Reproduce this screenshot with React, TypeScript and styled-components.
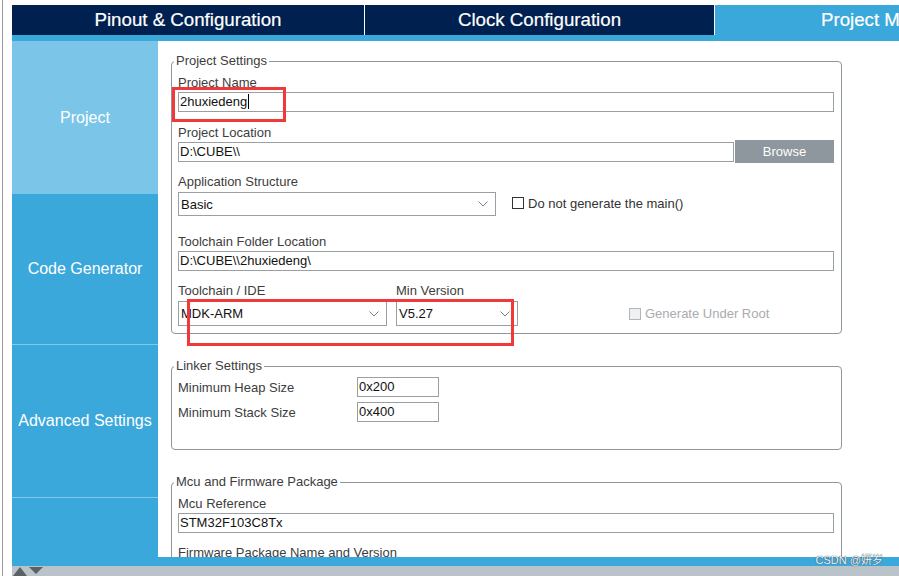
import styled, { createGlobalStyle } from "styled-components";

const GlobalStyle = createGlobalStyle`
  *, *::before, *::after { box-sizing: border-box; }
  html, body { margin: 0; padding: 0; background: #fff; overflow: hidden; }
  body { font-family: "Liberation Sans", Arial, sans-serif; }
`;

const Screen = styled.div`
  display: flex;
  width: 899px;
  height: 576px;
  overflow: hidden;
  background: #fff;
`;

const Gutter = styled.div`
  width: 12px;
  flex-shrink: 0;
  background: linear-gradient(to right, #fff 2px, #9a9a9a 2px, #9a9a9a 3px, #fff 3px);
`;

const Window = styled.div`
  position: relative;
  flex: 1;
  min-width: 0;
  display: flex;
  flex-direction: column;
  padding-top: 5px;
`;

const TabBar = styled.div`
  display: flex;
  height: 30px;
  flex-shrink: 0;
  background: #00204f;
  overflow: hidden;
`;

const Tab = styled.div<{ $width: number; $active?: boolean }>`
  flex: 0 0 ${(p) => p.$width}px;
  display: flex;
  align-items: center;
  justify-content: center;
  border-right: 1px solid #fff;
  background: ${(p) => (p.$active ? "#3aa8db" : "transparent")};
  color: #fff;
  font-size: 18.7px;
  white-space: nowrap;
  -webkit-text-stroke: 0.2px #fff;
`;

const TabStrip = styled.div`
  height: 6px;
  flex-shrink: 0;
  background: #3aa8db;
`;

const Body = styled.div`
  display: flex;
  height: 516px;
  flex-shrink: 0;
`;

const Sidebar = styled.div`
  width: 146px;
  flex-shrink: 0;
  display: flex;
  flex-direction: column;
  background: #3aa8db;
`;

const SideItem = styled.div<{ $height: number; $active?: boolean; $divider?: boolean }>`
  height: ${(p) => p.$height}px;
  flex-shrink: 0;
  display: flex;
  align-items: center;
  justify-content: center;
  background: ${(p) => (p.$active ? "#7bc6e8" : "#3aa8db")};
  border-top: ${(p) => (p.$divider ? "1px solid #82caec" : "none")};
  color: #fff;
  font-size: 16px;
  white-space: nowrap;
`;

const Main = styled.div`
  position: relative;
  flex: 1;
  padding: 12px 0 0 13px;
  overflow: hidden;
  background: #fff;
`;

const Group = styled.fieldset`
  width: 671px;
  margin: 0 0 24px 0;
  padding: 6px 7px 7px 6px;
  border: 1px solid #8f969c;
  border-radius: 4px;
  min-width: 0;
`;

const LinkerGroup = styled(Group)`
  padding: 3px 7px 27px 6px;
`;

const Legend = styled.legend`
  padding: 0 2px;
  margin-left: -4px;
  font-size: 13px;
  line-height: 16px;
  color: #3d3d3d;
`;

const Field = styled.div<{ $mb: number }>`
  margin-bottom: ${(p) => p.$mb}px;
`;

const Label = styled.div`
  height: 16px;
  font-size: 13px;
  line-height: 16px;
  color: #3d3d3d;
  white-space: nowrap;
`;

const TextBox = styled.div<{ $width?: number }>`
  width: ${(p) => (p.$width ? `${p.$width}px` : "100%")};
  height: 20px;
  margin-top: 1px;
  padding: 0 1px;
  border: 1px solid #9a9fa3;
  font-size: 13px;
  line-height: 18px;
  color: #111;
  white-space: nowrap;
  overflow: hidden;
`;

const Caret = styled.span`
  display: inline-block;
  width: 1px;
  height: 15px;
  margin-left: 1px;
  background: #000;
  vertical-align: -3px;
`;

const Row = styled.div<{ $align?: string }>`
  display: flex;
  align-items: ${(p) => p.$align ?? "flex-start"};
`;

const BrowseButton = styled.div`
  width: 99px;
  height: 23px;
  margin-left: 1px;
  margin-top: -1px;
  display: flex;
  align-items: center;
  justify-content: center;
  background: #8e979d;
  color: #fff;
  font-size: 13px;
`;

const SelectBox = styled.div<{ $width: number; $height: number }>`
  width: ${(p) => p.$width}px;
  height: ${(p) => p.$height}px;
  margin-top: 2px;
  padding: 0 7px 0 2px;
  display: flex;
  align-items: center;
  justify-content: space-between;
  border: 1px solid #9a9fa3;
  font-size: 13px;
  color: #111;
  white-space: nowrap;
`;

const Chevron = () => (
  <svg width="10" height="6" viewBox="0 0 10 6">
    <polyline points="0.5,0.5 5,5 9.5,0.5" fill="none" stroke="#7a7f83" strokeWidth="1" />
  </svg>
);

const CheckOption = styled.div<{ $disabled?: boolean; $ml: number; $height: number }>`
  height: ${(p) => p.$height}px;
  margin-left: ${(p) => p.$ml}px;
  display: flex;
  align-items: center;
  gap: 4px;
  font-size: 13px;
  color: ${(p) => (p.$disabled ? "#a8abaf" : "#333")};
  white-space: nowrap;
`;

const CheckBox = styled.span<{ $disabled?: boolean }>`
  width: 12px;
  height: 12px;
  border: 1px solid ${(p) => (p.$disabled ? "#b3b6b9" : "#333")};
  background: ${(p) => (p.$disabled ? "#eef0f2" : "#fff")};
`;

const ToolCol = styled.div<{ $width: number; $mr?: number }>`
  width: ${(p) => p.$width}px;
  margin-right: ${(p) => p.$mr ?? 0}px;
`;

const LinkRow = styled.div`
  display: flex;
  align-items: center;
  height: 20px;
  margin-bottom: 5px;
  &:last-child { margin-bottom: 0; }
`;

const LinkLabel = styled.div`
  width: 179px;
  font-size: 13px;
  color: #3d3d3d;
`;

const SmallBox = styled(TextBox)`
  margin-top: 0;
`;

const Annotation = styled.div<{ $left: number; $top: number; $w: number; $h: number }>`
  position: absolute;
  left: ${(p) => p.$left}px;
  top: ${(p) => p.$top}px;
  width: ${(p) => p.$w}px;
  height: ${(p) => p.$h}px;
  border: 3px solid #f2393a;
  pointer-events: none;
`;

const FooterStrip = styled.div`
  height: 9px;
  flex-shrink: 0;
  background: #3aa8db;
`;

const ScrollBar = styled.div`
  height: 10px;
  flex-shrink: 0;
  display: flex;
  align-items: flex-end;
  padding-left: 1px;
  background: #b9c3c9;
`;

const Watermark = styled.div`
  position: absolute;
  right: 16px;
  bottom: 10px;
  font-family: "Liberation Sans", "Noto Sans CJK SC", sans-serif;
  font-size: 11px;
  line-height: 12px;
  color: #eef3f6;
  text-shadow: 0 0 1px #4a5a66, 0 0 1px #4a5a66;
`;

const ScrollArrows = () => (
  <svg width="31" height="10" viewBox="0 0 31 10">
    <polygon points="0,10 7,1 14,10" fill="#5b6166" />
    <polygon points="16,1 30,1 23,8" fill="#5b6166" />
  </svg>
);

export default function App() {
  return (
    <>
      <GlobalStyle />
      <Screen>
        <Gutter />
        <Window>
          <TabBar>
            <Tab $width={353}>Pinout &amp; Configuration</Tab>
            <Tab $width={350}>Clock Configuration</Tab>
            <Tab $width={350} $active>
              Project Manager
            </Tab>
          </TabBar>
          <TabStrip />
          <Body>
            <Sidebar>
              <SideItem $height={153} $active>
                Project
              </SideItem>
              <SideItem $height={150}>Code Generator</SideItem>
              <SideItem $height={153} $divider>
                Advanced Settings
              </SideItem>
              <SideItem $height={60} $divider />
            </Sidebar>
            <Main>
              <Group>
                <Legend>Project Settings</Legend>
                <Field $mb={13}>
                  <Label>Project Name</Label>
                  <TextBox>
                    2huxiedeng
                    <Caret />
                  </TextBox>
                </Field>
                <Field $mb={11}>
                  <Label>Project Location</Label>
                  <Row>
                    <TextBox $width={556}>D:\CUBE\\</TextBox>
                    <BrowseButton>Browse</BrowseButton>
                  </Row>
                </Field>
                <Field $mb={18}>
                  <Label>Application Structure</Label>
                  <Row $align="center">
                    <SelectBox $width={318} $height={24}>
                      Basic
                      <Chevron />
                    </SelectBox>
                    <CheckOption $ml={16} $height={24}>
                      <CheckBox />
                      Do not generate the main()
                    </CheckOption>
                  </Row>
                </Field>
                <Field $mb={12}>
                  <Label>Toolchain Folder Location</Label>
                  <TextBox>D:\CUBE\\2huxiedeng\</TextBox>
                </Field>
                <Field $mb={0}>
                  <Row $align="flex-end">
                    <ToolCol $width={209} $mr={9}>
                      <Label>Toolchain / IDE</Label>
                      <SelectBox $width={209} $height={25}>
                        MDK-ARM
                        <Chevron />
                      </SelectBox>
                    </ToolCol>
                    <ToolCol $width={122}>
                      <Label>Min Version</Label>
                      <SelectBox $width={122} $height={25}>
                        V5.27
                        <Chevron />
                      </SelectBox>
                    </ToolCol>
                    <CheckOption $ml={111} $height={25} $disabled>
                      <CheckBox $disabled />
                      Generate Under Root
                    </CheckOption>
                  </Row>
                </Field>
              </Group>

              <LinkerGroup>
                <Legend>Linker Settings</Legend>
                <LinkRow>
                  <LinkLabel>Minimum Heap Size</LinkLabel>
                  <SmallBox $width={82}>0x200</SmallBox>
                </LinkRow>
                <LinkRow>
                  <LinkLabel>Minimum Stack Size</LinkLabel>
                  <SmallBox $width={82}>0x400</SmallBox>
                </LinkRow>
              </LinkerGroup>

              <Group>
                <Legend>Mcu and Firmware Package</Legend>
                <Field $mb={12}>
                  <Label>Mcu Reference</Label>
                  <TextBox>STM32F103C8Tx</TextBox>
                </Field>
                <Field $mb={12}>
                  <Label>Firmware Package Name and Version</Label>
                  <TextBox />
                </Field>
              </Group>

              <Annotation $left={14} $top={46} $w={114} $h={35} />
              <Annotation $left={29} $top={258} $w={327} $h={47} />
            </Main>
          </Body>
          <FooterStrip />
          <ScrollBar>
            <ScrollArrows />
          </ScrollBar>
          <Watermark>CSDN @妍岁</Watermark>
        </Window>
      </Screen>
    </>
  );
}
